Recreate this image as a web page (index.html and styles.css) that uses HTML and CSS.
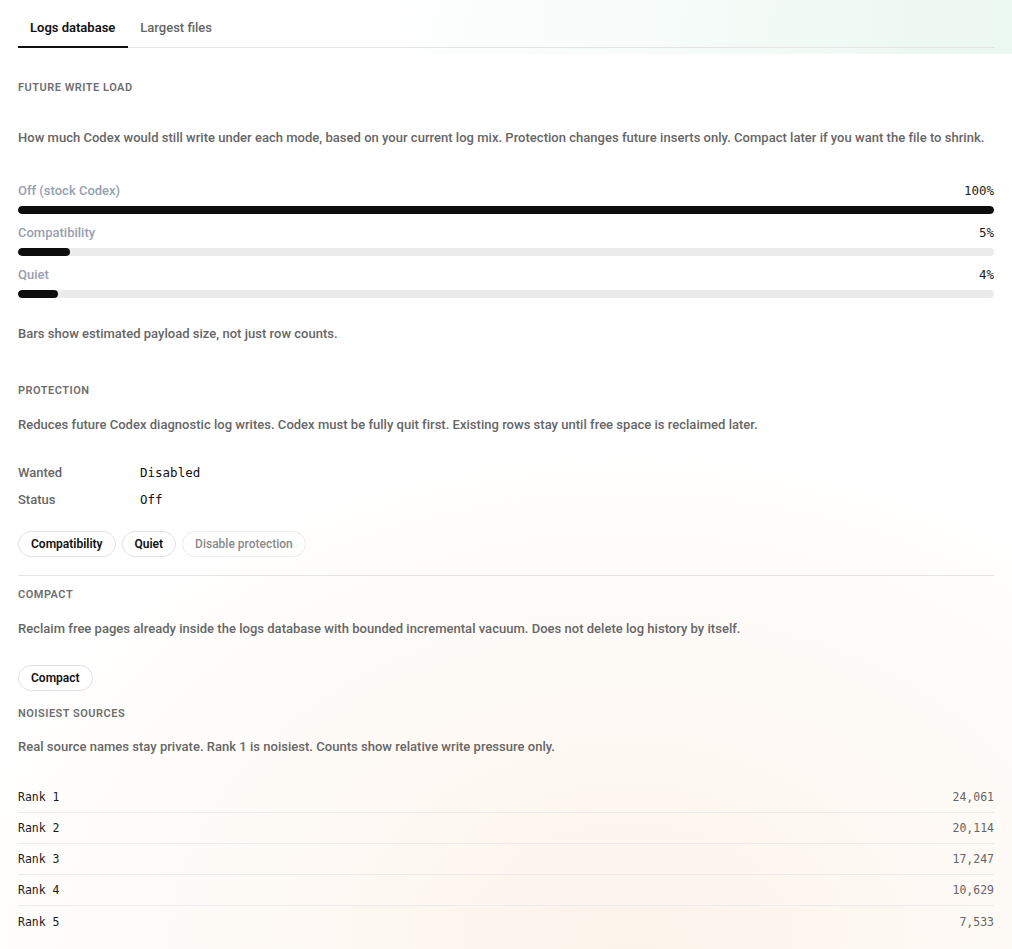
FILE: index.html
```html
<!DOCTYPE html>
<html lang="en">
<head>
<meta charset="utf-8">
<title>Logs database</title>
<link rel="stylesheet" href="styles.css">
</head>
<body>
<div class="page">
  <header class="topbar">
    <nav class="tabs">
      <button class="tab active">Logs database</button>
      <button class="tab">Largest files</button>
    </nav>
  </header>

  <main class="content">
    <section class="load">
      <h2 class="section-title">Future write load</h2>
      <p class="desc desc-load">How much Codex would still write under each mode, based on your current log mix. Protection changes future inserts only. Compact later if you want the file to shrink.</p>

      <div class="bars">
        <div class="bar-row">
          <div class="bar-head"><span class="bar-label">Off (stock Codex)</span><span class="bar-pct">100%</span></div>
          <div class="track"><div class="fill" style="width:100%"></div></div>
        </div>
        <div class="bar-row">
          <div class="bar-head"><span class="bar-label">Compatibility</span><span class="bar-pct">5%</span></div>
          <div class="track"><div class="fill" style="width:5.3%"></div></div>
        </div>
        <div class="bar-row">
          <div class="bar-head"><span class="bar-label">Quiet</span><span class="bar-pct">4%</span></div>
          <div class="track"><div class="fill" style="width:4.1%"></div></div>
        </div>
      </div>

      <p class="desc note">Bars show estimated payload size, not just row counts.</p>
    </section>

    <section class="protection">
      <h2 class="section-title">Protection</h2>
      <p class="desc desc-tight">Reduces future Codex diagnostic log writes. Codex must be fully quit first. Existing rows stay until free space is reclaimed later.</p>

      <dl class="facts">
        <div class="fact"><dt>Wanted</dt><dd>Disabled</dd></div>
        <div class="fact"><dt>Status</dt><dd>Off</dd></div>
      </dl>

      <div class="actions">
        <button class="pill">Compatibility</button>
        <button class="pill">Quiet</button>
        <button class="pill" disabled>Disable protection</button>
      </div>
    </section>

    <section class="compact">
      <h2 class="section-title">Compact</h2>
      <p class="desc desc-tight">Reclaim free pages already inside the logs database with bounded incremental vacuum. Does not delete log history by itself.</p>
      <div class="actions actions-compact">
        <button class="pill">Compact</button>
      </div>
    </section>

    <section class="sources">
      <h2 class="section-title">Noisiest sources</h2>
      <p class="desc desc-sources">Real source names stay private. Rank 1 is noisiest. Counts show relative write pressure only.</p>
      <ul class="ranks">
        <li class="rank"><span class="rank-name">Rank 1</span><span class="rank-count">24,061</span></li>
        <li class="rank"><span class="rank-name">Rank 2</span><span class="rank-count">20,114</span></li>
        <li class="rank"><span class="rank-name">Rank 3</span><span class="rank-count">17,247</span></li>
        <li class="rank"><span class="rank-name">Rank 4</span><span class="rank-count">10,629</span></li>
        <li class="rank"><span class="rank-name">Rank 5</span><span class="rank-count">7,533</span></li>
      </ul>
    </section>
  </main>
</div>
</body>
</html>
```

FILE: styles.css
```css
* {
  box-sizing: border-box;
}

html,
body {
  margin: 0;
  padding: 0;
}

body {
  font-family: Roboto, "Noto Sans", "Liberation Sans", sans-serif;
  color: #111;
  background: #fff;
  min-height: 949px;
}

.page {
  min-height: 949px;
  background:
    radial-gradient(ellipse 70% 55% at 62% 100%, rgba(252, 240, 228, 0.75), rgba(255, 255, 255, 0) 100%),
    #fff;
}

/* tab strip with a faint mint wash toward the right */
.topbar {
  padding: 0 18px 6px;
  background: linear-gradient(100deg, rgba(255, 255, 255, 0) 35%, rgba(232, 246, 239, 0.85) 100%);
}

.tabs {
  display: flex;
  height: 48px;
  border-bottom: 1px solid #e4e4e4;
}

.tab {
  font-family: inherit;
  font-size: 13px;
  font-weight: 500;
  color: #666;
  background: none;
  border: 0;
  border-bottom: 2px solid transparent;
  margin-bottom: -1px;
  padding: 8px 13px 0 12px;
  cursor: pointer;
}

.tab.active {
  color: #111;
  font-weight: 600;
  border-bottom-color: #111;
}

.content {
  padding: 0 18px 0;
}

.section-title {
  margin: 0;
  font-size: 11px;
  line-height: 16px;
  font-weight: 600;
  letter-spacing: 0.5px;
  text-transform: uppercase;
  color: #6e6e6e;
}

.load .section-title {
  margin-top: 26px;
}

.desc {
  margin: 0;
  font-size: 13px;
  line-height: 20px;
  font-weight: 500;
  letter-spacing: 0.02px;
  color: #666;
}

.desc-load {
  margin-top: 32px;
}

.desc-tight {
  margin-top: 16px;
}

.bars {
  margin-top: 32px;
  display: flex;
  flex-direction: column;
  gap: 8px;
}

.bar-head {
  display: flex;
  justify-content: space-between;
  align-items: center;
  height: 20px;
}

.bar-label {
  font-size: 13px;
  font-weight: 500;
  color: #97a0b0;
}

.bar-pct {
  font-family: "DejaVu Sans Mono", "Liberation Mono", monospace;
  font-size: 12.5px;
  color: #222;
}

.track {
  margin-top: 6px;
  height: 8px;
  border-radius: 4px;
  background: #ebebeb;
  overflow: hidden;
}

.fill {
  height: 100%;
  border-radius: 4px;
  background: #0d0d0d;
}

.note {
  margin-top: 26px;
}

.protection .section-title {
  margin-top: 39px;
}

.facts {
  margin: 27px 0 0;
  display: flex;
  flex-direction: column;
  gap: 7px;
}

.fact {
  display: grid;
  grid-template-columns: 122px 1fr;
  align-items: center;
  height: 20px;
}

.fact dt {
  font-size: 13px;
  font-weight: 500;
  color: #666;
}

.fact dd {
  margin: 0;
  font-family: "DejaVu Sans Mono", "Liberation Mono", monospace;
  font-size: 12.5px;
  color: #111;
}

.actions {
  margin-top: 22px;
  display: flex;
  gap: 6px;
  padding-bottom: 18px;
  border-bottom: 1px solid #e4e4e4;
}

.actions-compact {
  margin-top: 26px;
  padding-bottom: 0;
  border-bottom: 0;
}

.pill {
  font-family: inherit;
  font-size: 12px;
  font-weight: 600;
  color: #111;
  height: 26px;
  padding: 0 12px;
  border: 1px solid #e2e2e2;
  border-radius: 999px;
  background: #fff;
  cursor: pointer;
}

.pill:disabled {
  color: #8a8a8a;
  font-weight: 500;
  border-color: #ececec;
  background: rgba(255, 255, 255, 0.6);
  cursor: default;
}

.compact .section-title {
  margin-top: 11px;
}

.sources .section-title {
  margin-top: 15px;
}

.desc-sources {
  margin-top: 15px;
}

.ranks {
  list-style: none;
  margin: 25px 0 0;
  padding: 0;
}

.rank {
  display: flex;
  justify-content: space-between;
  align-items: center;
  height: 31px;
  border-bottom: 1px solid #ebebeb;
  font-family: "DejaVu Sans Mono", "Liberation Mono", monospace;
  font-size: 11.5px;
}

.rank:last-child {
  border-bottom: 0;
}

.rank-name {
  color: #1a1a1a;
}

.rank-count {
  color: #666;
}
```
